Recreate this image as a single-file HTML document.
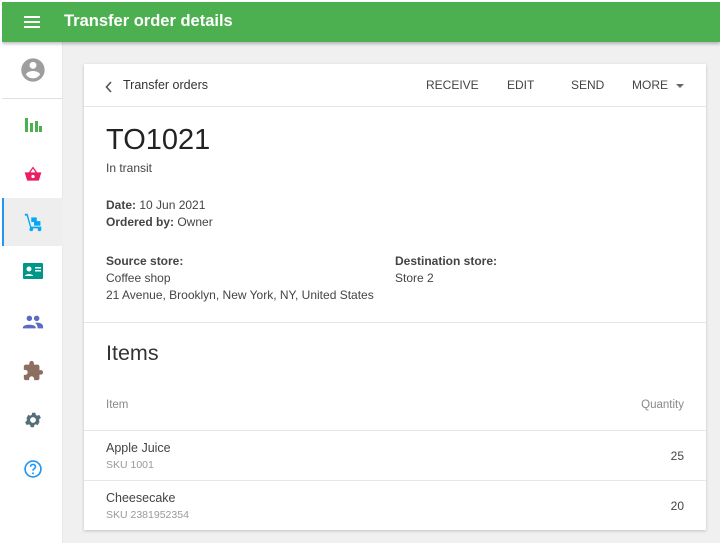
<!DOCTYPE html>
<html><head><meta charset="utf-8"><style>
*{margin:0;padding:0;box-sizing:border-box}
body{width:722px;height:545px;background:#fff;font-family:"Liberation Sans",sans-serif;position:relative;overflow:hidden;color:#333}
.frame{position:absolute;left:2px;top:2px;width:718px;height:541px;background:#f0f0f0;overflow:hidden}
.hdr{position:absolute;left:0;top:0;width:718px;height:40px;background:#4caf50;box-shadow:0 2px 3px rgba(0,0,0,.25);z-index:2}
.hdr .t{position:absolute;left:62px;top:10px;color:#fff;font-size:16.5px;font-weight:bold}
.hdr .m{position:absolute;left:22px;top:14px;width:16px;height:2px;background:#fff;box-shadow:0 5px 0 #fff,0 10px 0 #fff}
.side{position:absolute;left:0;top:40px;width:61px;height:501px;background:#fff;border-right:1px solid #e8e8e8}
.ic{position:absolute;left:0;width:61px;height:48px;display:flex;align-items:center;justify-content:center}
.card{position:absolute;left:82px;top:62px;width:622px;height:466px;background:#fff;box-shadow:0 1px 3px rgba(0,0,0,.2)}
.abs{position:absolute;white-space:nowrap}
.sm{font-size:12px;color:#444}
.line{position:absolute;left:0;width:622px;height:1px;background:#e6e6e6}
.btn{position:absolute;top:14px;font-size:12px;color:#444}
</style></head><body><div class="frame">
<div class="hdr"><div class="m"></div><div class="t">Transfer order details</div></div>
<div class="side">
 <div class="ic" style="top:4px"><svg width="28" height="28" viewBox="0 0 24 24"><path fill="#9e9e9e" d="M12 2C6.5 2 2 6.5 2 12s4.5 10 10 10 10-4.5 10-10S17.5 2 12 2zm0 3a3 3 0 110 6 3 3 0 010-6zm0 14.2c-2.5 0-4.7-1.3-6-3.2 0-2 4-3.1 6-3.1s6 1.1 6 3.1c-1.3 1.9-3.5 3.2-6 3.2z"/></svg></div>
 <div style="position:absolute;left:0;top:56px;width:61px;height:1px;background:#e0e0e0"></div>
 <div class="ic" style="top:59px"><svg width="20" height="20" viewBox="0 0 20 20" fill="#4caf50"><rect x="2" y="3" width="3" height="14"/><rect x="7" y="8" width="3" height="9"/><rect x="12" y="6" width="3" height="11"/><rect x="16" y="11" width="3" height="6"/></svg></div>
 <div class="ic" style="top:108px"><svg width="20" height="20" viewBox="0 0 24 24" fill="#e91e63"><path d="M12 3l-5 7H2l3 10h14l3-10h-5zm0 2.5L15 10H9zm0 7.5a2 2 0 110 4 2 2 0 010-4z"/></svg></div>
 <div class="ic" style="top:156px;background:#eeeeee;border-left:2px solid #2196f3"><svg width="22" height="22" viewBox="0 0 24 24" fill="#03a9f4"><path d="M2 3h3l4 14h11v2H8L4 5H2z"/><rect x="9" y="7" width="6" height="5"/><rect x="12" y="11" width="7" height="5"/><circle cx="9" cy="20" r="2"/><circle cx="18" cy="20" r="2"/></svg></div>
 <div class="ic" style="top:205px"><svg width="22" height="20" viewBox="0 0 22 20"><rect x="1" y="2" width="20" height="16" rx="1" fill="#009688"/><circle cx="7" cy="8" r="2.5" fill="#fff"/><path d="M3 15c0-2.5 8-2.5 8 0z" fill="#fff"/><rect x="13" y="6" width="6" height="1.5" fill="#fff"/><rect x="13" y="9" width="6" height="1.5" fill="#fff"/></svg></div>
 <div class="ic" style="top:256px"><svg width="22" height="16" viewBox="0 0 24 16" fill="#5c6bc0"><circle cx="8" cy="4" r="3"/><circle cx="16" cy="4" r="3"/><path d="M1 14c0-4 14-4 14 0v1H1zM14 9c3-1 9 0 9 4v2h-6v-1c0-2-1-4-3-5z"/></svg></div>
 <div class="ic" style="top:305px"><svg width="22" height="22" viewBox="0 0 24 24" fill="#8d6e63"><path d="M20.5 11H19V7c0-1.1-.9-2-2-2h-4V3.5a2.5 2.5 0 00-5 0V5H4c-1.1 0-2 .9-2 2v3.8h1.5c1.5 0 2.7 1.2 2.7 2.7S5 16.2 3.5 16.2H2V20c0 1.1.9 2 2 2h3.8v-1.5c0-1.5 1.2-2.7 2.7-2.7s2.7 1.2 2.7 2.7V22H17c1.1 0 2-.9 2-2v-4h1.5a2.5 2.5 0 000-5z"/></svg></div>
 <div class="ic" style="top:354px"><svg width="20" height="20" viewBox="0 0 24 24" fill="#546e7a"><path d="M19.4 13a7.5 7.5 0 000-2l2.1-1.6-2-3.5-2.5 1a7 7 0 00-1.7-1l-.4-2.6h-4l-.4 2.6a7 7 0 00-1.7 1l-2.5-1-2 3.5L4.6 11a7.5 7.5 0 000 2l-2.1 1.6 2 3.5 2.5-1a7 7 0 001.7 1l.4 2.6h4l.4-2.6a7 7 0 001.7-1l2.5 1 2-3.5zM12 15.5a3.5 3.5 0 110-7 3.5 3.5 0 010 7z"/></svg></div>
 <div class="ic" style="top:403px"><svg width="20" height="20" viewBox="0 0 24 24"><circle cx="12" cy="12" r="9.5" fill="none" stroke="#2196f3" stroke-width="2"/><path d="M9 9.5a3 3 0 116 0c0 2-3 2.2-3 4.5" fill="none" stroke="#2196f3" stroke-width="2"/><circle cx="12" cy="17.3" r="1.2" fill="#2196f3"/></svg></div>
</div>
<div class="card">
 <svg class="abs" style="left:21px;top:17px" width="8" height="12" viewBox="0 0 8 12"><path d="M6 1L1.5 6 6 11" fill="none" stroke="#555" stroke-width="1.6"/></svg>
 <div class="abs" style="left:39px;top:14px;font-size:12.5px;color:#333">Transfer orders</div>
 <div class="btn" style="left:342px">RECEIVE</div>
 <div class="btn" style="left:423px">EDIT</div>
 <div class="btn" style="left:487px">SEND</div>
 <div class="btn" style="left:548px">MORE</div>
 <div class="abs" style="left:592px;top:20px;width:0;height:0;border-left:4px solid transparent;border-right:4px solid transparent;border-top:4px solid #666"></div>
 <div class="line" style="top:42px"></div>
 <div class="abs" style="left:22px;top:60px;font-size:29px;color:#222">TO1021</div>
 <div class="abs sm" style="left:22px;top:97px">In transit</div>
 <div class="abs sm" style="left:22px;top:134px"><b>Date:</b> 10 Jun 2021</div>
 <div class="abs sm" style="left:22px;top:151px"><b>Ordered by:</b> Owner</div>
 <div class="abs sm" style="left:22px;top:189px;line-height:17px"><b>Source store:</b><br>Coffee shop<br>21 Avenue, Brooklyn, New York, NY, United States</div>
 <div class="abs sm" style="left:311px;top:189px;line-height:17px"><b>Destination store:</b><br>Store 2</div>
 <div class="line" style="top:258px"></div>
 <div class="abs" style="left:22px;top:277px;font-size:21.5px;color:#333">Items</div>
 <div class="abs" style="left:22px;top:335px;font-size:11.5px;color:#888">Item</div>
 <div class="abs" style="right:22px;top:335px;font-size:11.5px;color:#888">Quantity</div>
 <div class="line" style="top:366px"></div>
 <div class="abs sm" style="left:22px;top:377px;font-size:12.5px">Apple Juice</div>
 <div class="abs" style="left:22px;top:395px;font-size:10.5px;color:#999">SKU 1001</div>
 <div class="abs sm" style="right:22px;top:385px">25</div>
 <div class="line" style="top:416px"></div>
 <div class="abs sm" style="left:22px;top:427px;font-size:12.5px">Cheesecake</div>
 <div class="abs" style="left:22px;top:445px;font-size:10.5px;color:#999">SKU 2381952354</div>
 <div class="abs sm" style="right:22px;top:435px">20</div>
</div>
</div></body></html>
